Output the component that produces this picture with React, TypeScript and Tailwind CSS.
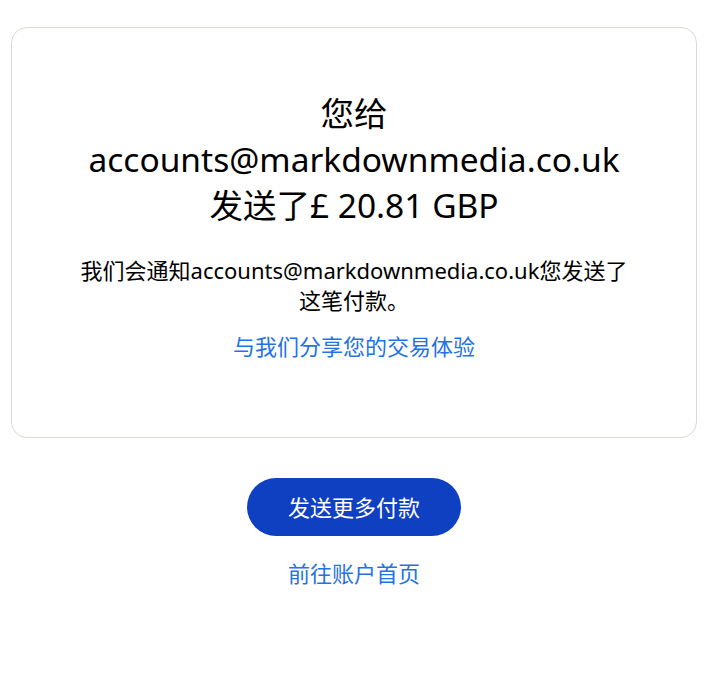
import React from 'react';

const font = { fontFamily: '"Noto Sans", "Noto Sans CJK SC", sans-serif' };

export default function App() {
  return (
    <div className="min-h-screen bg-white pl-[11px] pr-[20px] pt-[27px]" style={font}>
      <div className="flex flex-col items-center rounded-2xl border border-[#dcd9d0] px-8 pt-[62px] pb-[76px] text-center">
        <h1 className="max-w-[560px] text-[33.5px] leading-[46px] font-normal text-black">
          您给
          <br />
          accounts@markdownmedia.co.uk
          <br />
          发送了£ 20.81 GBP
        </h1>
        <p className="mt-[27px] max-w-[556px] text-[22px] leading-[30px] text-black">
          我们会通知accounts@markdownmedia.co.uk您发送了这笔付款。
        </p>
        <a className="mt-[16px] text-[22px] leading-[30px] text-[#1f72e8]" href="#">
          与我们分享您的交易体验
        </a>
      </div>
      <div className="flex flex-col items-center pt-10">
        <button className="h-[58px] w-[214px] rounded-full bg-[#1040c2] text-[22px] text-white">
          发送更多付款
        </button>
        <a className="mt-[21px] text-[22px] leading-[32px] text-[#1f72e8]" href="#">
          前往账户首页
        </a>
      </div>
    </div>
  );
}
